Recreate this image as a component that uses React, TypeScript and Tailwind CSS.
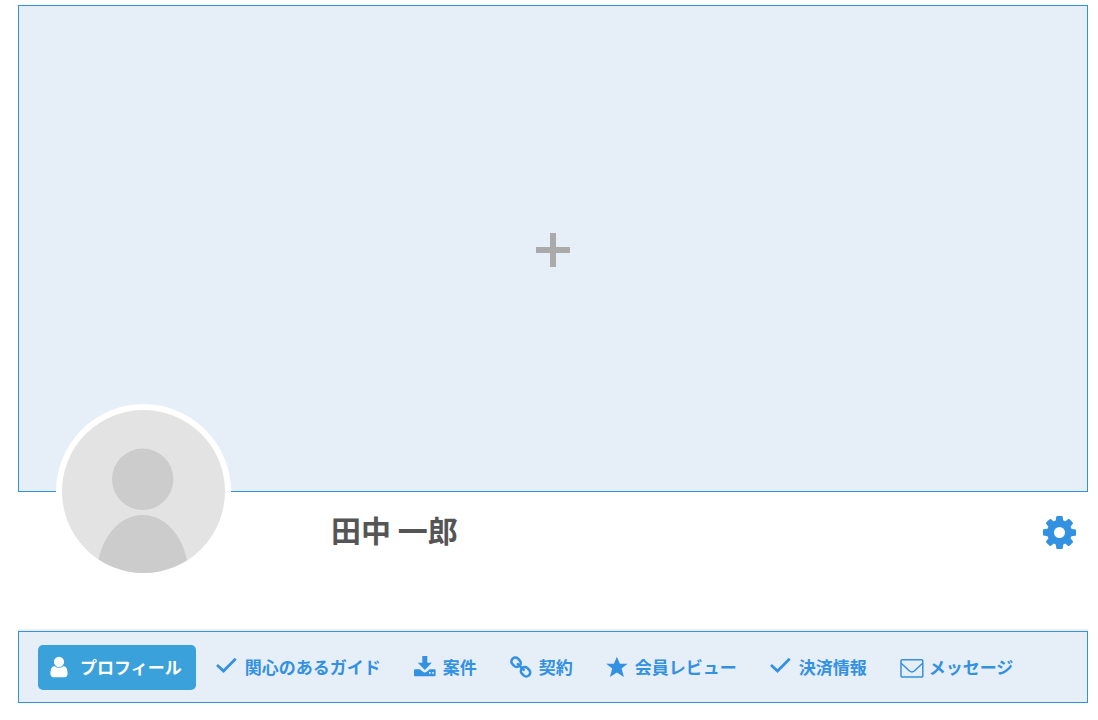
import type { ReactNode } from "react";

const stroke = { fill: "none", stroke: "currentColor" } as const;

function UserIcon() {
  return (
    <svg viewBox="96 0 1600 1792" className="h-6 w-[22px] shrink-0" fill="currentColor" aria-hidden="true">
      <path d="M1536 1399q0 109-62.5 187t-150.5 78h-854q-88 0-150.5-78t-62.5-187q0-85 8.500-160.500t31.500-152 58.500-131 94-89 134.500-34.500q131 128 313 128t313-128q76 0 134.500 34.500t94 89 58.500 131 31.500 152 8.500 160.500zm-256-887q0 159-112.500 271.500t-271.500 112.500-271.500-112.500-112.500-271.500 112.500-271.500 271.500-112.500 271.500 112.500 112.500 271.500z" />
    </svg>
  );
}

function CheckIcon() {
  return (
    <svg viewBox="0 0 22 24" className="h-6 w-[22px] shrink-0" {...stroke} strokeWidth="2.7" aria-hidden="true">
      <path d="M1 9.900L7.500 16L19.700 3.800" />
    </svg>
  );
}

function DownloadIcon() {
  return (
    <svg viewBox="0 0 22 24" className="h-6 w-[22px] shrink-0" fill="currentColor" aria-hidden="true">
      <path d="M8.300 1h5v6.700h4.500L10.800 15L3.800 7.700h4.500z" />
      <path
        fillRule="evenodd"
        d="M1 14.300h4.800l2.800 2.300q2.200 1.700 4.400 0l2.800-2.300h4.800q1 0 1 1v4.900q0 1-1 1H1q-1 0-1-1v-4.900q0-1 1-1zM15 17v1.700h1.600V17zM18.200 17v1.700h1.600V17z"
      />
    </svg>
  );
}

function LinkIcon() {
  return (
    <svg viewBox="0 0 22 24" className="h-6 w-[22px] shrink-0" {...stroke} strokeWidth="2.5" aria-hidden="true">
      <g transform="translate(10.800 12) rotate(45)">
        <rect x="-11.600" y="-3.900" width="9.800" height="7.800" rx="3.700" />
        <rect x="1.800" y="-3.900" width="9.800" height="7.800" rx="3.700" />
        <path d="M-4.200 0h8.400" strokeLinecap="round" />
      </g>
    </svg>
  );
}

function StarIcon() {
  return (
    <svg viewBox="0 0 22 24" className="h-6 w-[22px] shrink-0" fill="currentColor" aria-hidden="true">
      <path d="M10.900 1.700L13.900 8.700H21.600L15.600 13.500L17.900 21.900L10.900 17.400L3.900 21.900L6.200 13.500L.2 8.700H7.900z" />
    </svg>
  );
}

function MailIcon() {
  return (
    <svg viewBox="0 0 24 24" className="-mr-0.5 size-6 shrink-0" {...stroke} strokeWidth="1.500" aria-hidden="true">
      <rect x="1" y="4.800" width="21.800" height="17.300" rx="1.200" />
      <path d="M1.200 8.300L9.500 16Q11.900 17.800 14.300 16L22.600 8.300" />
    </svg>
  );
}

function GearIcon() {
  return (
    <svg viewBox="128 128 1536 1536" className="size-[33px]" fill="currentColor" aria-hidden="true">
      <path d="M1152 896q0-106-75-181t-181-75-181 75-75 181 75 181 181 75 181-75 75-181zm512-109v222q0 12-8 23t-20 13l-185 28q-19 54-39 91 35 50 107 138 10 12 10 25t-9 23q-27 37-99 108t-94 71q-12 0-26-9l-138-108q-44 23-91 38-16 136-29 186-7 28-36 28h-222q-14 0-24.500-8.500t-11.500-21.500l-28-184q-49-16-90-37l-141 107q-10 9-25 9-14 0-25-11-126-114-165-168-7-10-7-23 0-12 8-23 15-21 51-66.500t54-70.500q-27-50-41-99l-183-27q-13-2-21-12.500t-8-23.500v-222q0-12 8-23t19-13l186-28q14-46 39-92-40-57-107-138-10-12-10-24 0-10 9-23 26-36 98.500-107.500t94.500-71.500q13 0 26 10l138 107q44-23 91-38 16-136 29-186 7-28 36-28h222q14 0 24.500 8.500t11.500 21.500l28 184q49 16 90 37l142-107q9-9 24-9 13 0 25 10 129 119 165 170 7 8 7 22 0 12-8 23-15 21-51 66.500t-54 70.500q26 50 41 98l183 28q13 2 21 12.500t8 23.500z" />
    </svg>
  );
}

const tabs: { label: string; href: string; icon: ReactNode }[] = [
  { label: "プロフィール", href: "#profile", icon: <UserIcon /> },
  { label: "関心のあるガイド", href: "#guides", icon: <CheckIcon /> },
  { label: "案件", href: "#projects", icon: <DownloadIcon /> },
  { label: "契約", href: "#contracts", icon: <LinkIcon /> },
  { label: "会員レビュー", href: "#reviews", icon: <StarIcon /> },
  { label: "決済情報", href: "#payments", icon: <CheckIcon /> },
  { label: "メッセージ", href: "#messages", icon: <MailIcon /> },
];

export default function App() {
  return (
    <main className="bg-white pt-[5px] pr-2.5 pb-4 pl-[18px] font-['Noto_Sans_CJK_JP',sans-serif]">
      <button
        type="button"
        aria-label="+"
        className="flex h-[487px] w-full items-center justify-center border border-[#3391e1] bg-[#e6eef8] pt-0.5 text-[#aaa]"
      >
        <svg viewBox="0 0 34 34" className="size-[34px]" fill="currentColor" aria-hidden="true">
          <path d="M14 0h6v14h14v6H20v14h-6V20H0v-6h14z" />
        </svg>
      </button>

      <header className="flex h-[137px] items-start pr-3 pl-[38px]">
        <div className="relative -mt-[88px] size-[175px] shrink-0 overflow-hidden rounded-full border-[6px] border-white bg-[#e3e3e3]">
          <svg viewBox="0 0 163 163" className="size-full" fill="#ccc" aria-hidden="true">
            <circle cx="80.700" cy="69.300" r="30.700" />
            <path d="M35 163C36 130 56 105 80.700 105S125 130 126.500 163z" />
          </svg>
        </div>
        <h1 className="ml-[100px] pt-[15px] text-[30px] leading-[44px] font-bold text-[#555]">田中 一郎</h1>
        <button type="button" aria-label="設定" className="mt-6 ml-auto text-[#3391e1]">
          <GearIcon />
        </button>
      </header>

      <nav className="border-t-2 border-[#eee]">
        <div className="flex items-center gap-[7px] border border-[#3391e1] bg-[#e6eef7] px-[19px] pt-[13px] pb-3">
          {tabs.map((tab, index) => (
            <a
              key={tab.href}
              href={tab.href}
              aria-current={index === 0 ? "page" : undefined}
              className={
                index === 0
                  ? "flex h-[45px] items-center gap-[10px] rounded-[5px] bg-[#3ba1da] pr-[14px] pb-px pl-[10px] text-[17px] leading-6 font-bold whitespace-nowrap text-white"
                  : "flex h-[45px] items-center gap-[7px] rounded-[5px] px-[13px] pb-px text-[17px] leading-6 font-bold whitespace-nowrap text-[#3391e1]"
              }
            >
              {tab.icon}
              <span>{tab.label}</span>
            </a>
          ))}
        </div>
      </nav>
    </main>
  );
}
